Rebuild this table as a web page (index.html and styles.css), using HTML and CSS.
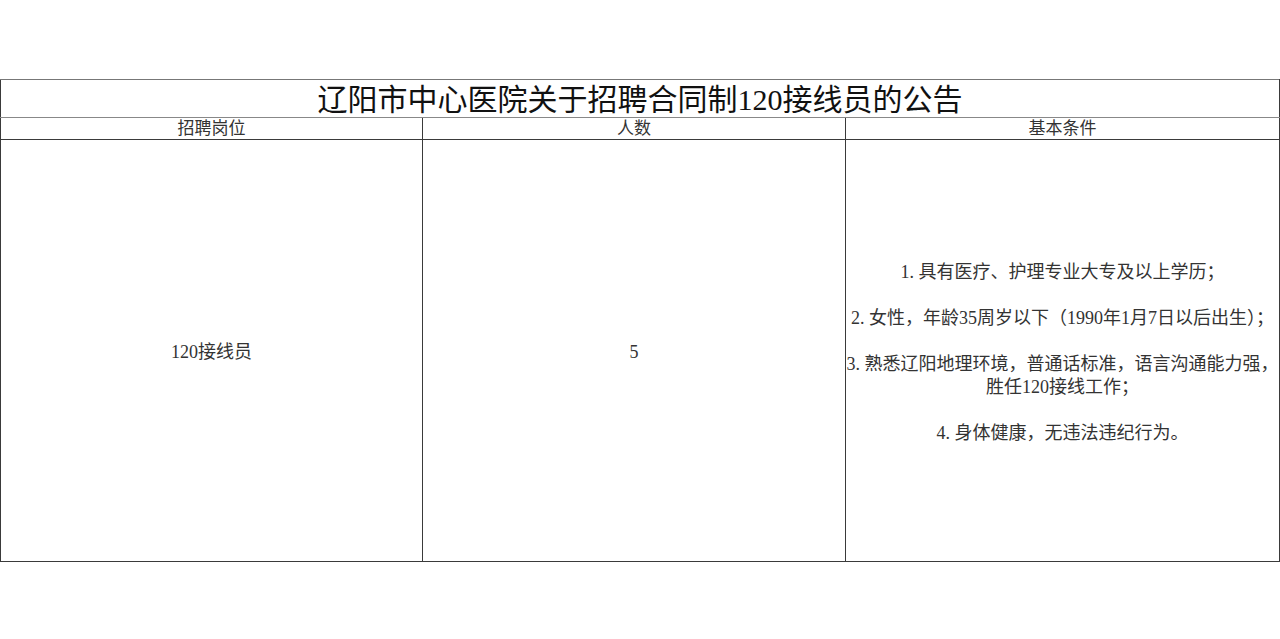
FILE: index.html
```html
<!DOCTYPE html>
<html lang="zh-CN">
<head>
<meta charset="utf-8">
<title>辽阳市中心医院关于招聘合同制120接线员的公告</title>
<link rel="stylesheet" href="styles.css">
</head>
<body>
<div class="page">
  <table class="notice">
    <colgroup>
      <col class="c1">
      <col class="c2">
      <col class="c3">
    </colgroup>
    <tr class="title-row">
      <td colspan="3" class="title">辽阳市中心医院关于招聘合同制120接线员的公告</td>
    </tr>
    <tr class="head-row">
      <td>招聘岗位</td>
      <td>人数</td>
      <td>基本条件</td>
    </tr>
    <tr class="body-row">
      <td>120接线员</td>
      <td>5</td>
      <td class="req">
        <p>1. 具有医疗、护理专业大专及以上学历；</p>
        <p>2. 女性，年龄35周岁以下（1990年1月7日以后出生）；</p>
        <p>3. 熟悉辽阳地理环境，普通话标准，语言沟通能力强，<br>胜任120接线工作；</p>
        <p>4. 身体健康，无违法违纪行为。</p>
      </td>
    </tr>
  </table>
</div>
</body>
</html>
```
FILE: styles.css
```css
html, body {
  margin: 0;
  padding: 0;
  background: #ffffff;
}
.page {
  padding-top: 79px;
}
.notice {
  width: 1279px;
  border-collapse: collapse;
  table-layout: fixed;
  font-family: "Liberation Serif", "Noto Sans CJK SC", serif;
  color: #333333;
}
.c1 { width: 422px; }
.c2 { width: 423px; }
.c3 { width: 434px; }
.notice td {
  border: 1px solid #3a3a3a;
  padding: 0;
  text-align: center;
  vertical-align: middle;
  font-size: 18px;
  line-height: 23px;
}
.title-row td {
  height: 35px;
  padding-top: 2px;
  font-size: 30px;
  line-height: 35px;
  color: #111111;
  border-top-color: #777777;
  border-bottom-color: #888888;
}
.head-row td {
  height: 21px;
  line-height: 21px;
  font-size: 17px;
}
.body-row td {
  height: 417px;
  padding-top: 4px;
}
.req p {
  margin: 0 0 23px;
}
.req p:last-child {
  margin-bottom: 0;
}
```
